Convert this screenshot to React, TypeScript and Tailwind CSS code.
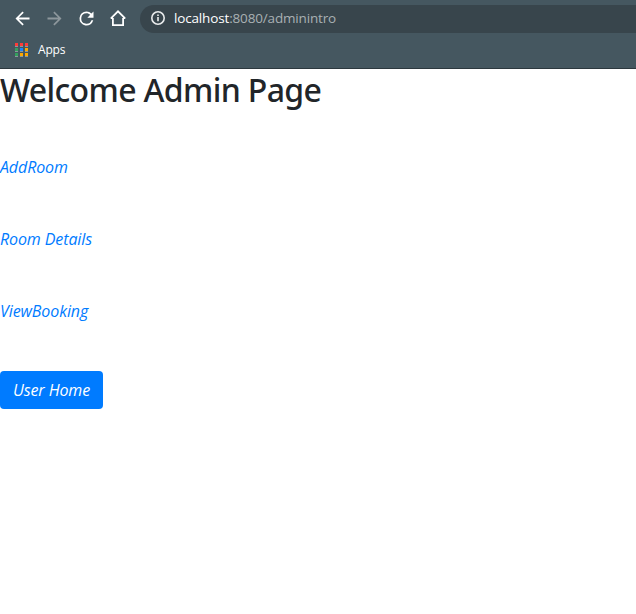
const links = ["AddRoom", "Room Details", "ViewBooking"];

const appDots = [
  "bg-[#ff3b38]", "bg-[#ff3b38]", "bg-[#ff3b38]",
  "bg-[#34a05c]", "bg-[#1a85ff]", "bg-[#ffa800]",
  "bg-[#34a05c]", "bg-[#ffa800]", "bg-[#ffa800]",
];

function NavIcon({ d, className = "text-white" }: { d: string; className?: string }) {
  return (
    <svg viewBox="0 0 24 24" className={`size-[21px] shrink-0 fill-current ${className}`}>
      <path d={d} />
    </svg>
  );
}

function BrowserBar() {
  return (
    <header className="h-[69px] border-b border-[#2c383e] bg-[#455760]">
      <div className="flex h-9 items-center pl-[11.5px]">
        <div className="flex w-[128.5px] items-center gap-[11px]">
          <NavIcon d="M20 10.8H7.83l5.59-5.39L12 4l-8 8 8 8 1.41-1.41L7.83 13.2H20v-2.4z" />
          <NavIcon className="text-[#8d979c]" d="M12 4l-1.41 1.41L16.17 10.8H4v2.4h12.17l-5.58 5.39L12 20l8-8z" />
          <NavIcon d="M17.65 6.35A7.96 7.96 0 0 0 12 4a8 8 0 1 0 7.73 10h-2.08A6 6 0 1 1 12 6c1.66 0 3.14.69 4.22 1.78L13 11h7V4l-2.35 2.35z" />
          <svg viewBox="0 0 20 20" className="size-5 shrink-0 fill-none stroke-white stroke-[1.8]">
            <path d="M2.9 10.4 10 3.3l7.1 7.1M4.9 10v7.1h10.2V10M2.7 10.2H5M17.3 10.2H15" />
          </svg>
        </div>
        <div className="mt-0.5 flex h-7 flex-1 items-center rounded-l-full bg-[#38454c] pb-0.5 pl-2.5">
          <svg viewBox="0 0 16 16" className="size-4 fill-none stroke-[#e9ebec] stroke-[1.6]">
            <circle cx="8" cy="8" r="6.2" />
            <path d="M8 7v4.2M8 4.4v1.5" />
          </svg>
          <span className="ml-2 whitespace-nowrap font-['Open_Sans',sans-serif] text-[13.5px] tracking-[-0.16px] text-[#a9b0b3]">
            <span className="text-white">localhost</span>:8080/adminintro
          </span>
        </div>
      </div>
      <div className="flex h-7 items-center pl-[15px]">
        <div className="grid grid-cols-3 gap-x-[2px] gap-y-[1px]">
          {appDots.map((color, i) => (
            <span key={i} className={`h-1 w-[3px] border-b border-[#8b989c] ${color}`} />
          ))}
        </div>
        <span className="ml-[10px] font-['Open_Sans',sans-serif] text-[12px] tracking-[-0.2px] text-white">Apps</span>
      </div>
    </header>
  );
}

export default function App() {
  return (
    <div className="h-[614px] overflow-hidden bg-white font-['Open_Sans','Noto_Sans',sans-serif]">
      <BrowserBar />
      <main>
        <h1 className="mt-0.5 h-[74px] whitespace-nowrap font-['Noto_Sans',sans-serif] text-[32px] leading-[38px] font-medium tracking-[-0.65px] text-[#212529]">
          Welcome Admin Page
        </h1>
        <nav className="flex flex-col items-start gap-12 pt-2.5 text-[16px] leading-6 italic">
          {links.map((label) => (
            <a key={label} href="#" className="tracking-[-0.1px] text-[#007bff]">{label}</a>
          ))}
          <a href="#" className="flex h-[38px] w-[103px] items-center justify-center rounded bg-[#007bff] tracking-[-0.1px] whitespace-nowrap text-white">
            User Home
          </a>
        </nav>
      </main>
    </div>
  );
}
